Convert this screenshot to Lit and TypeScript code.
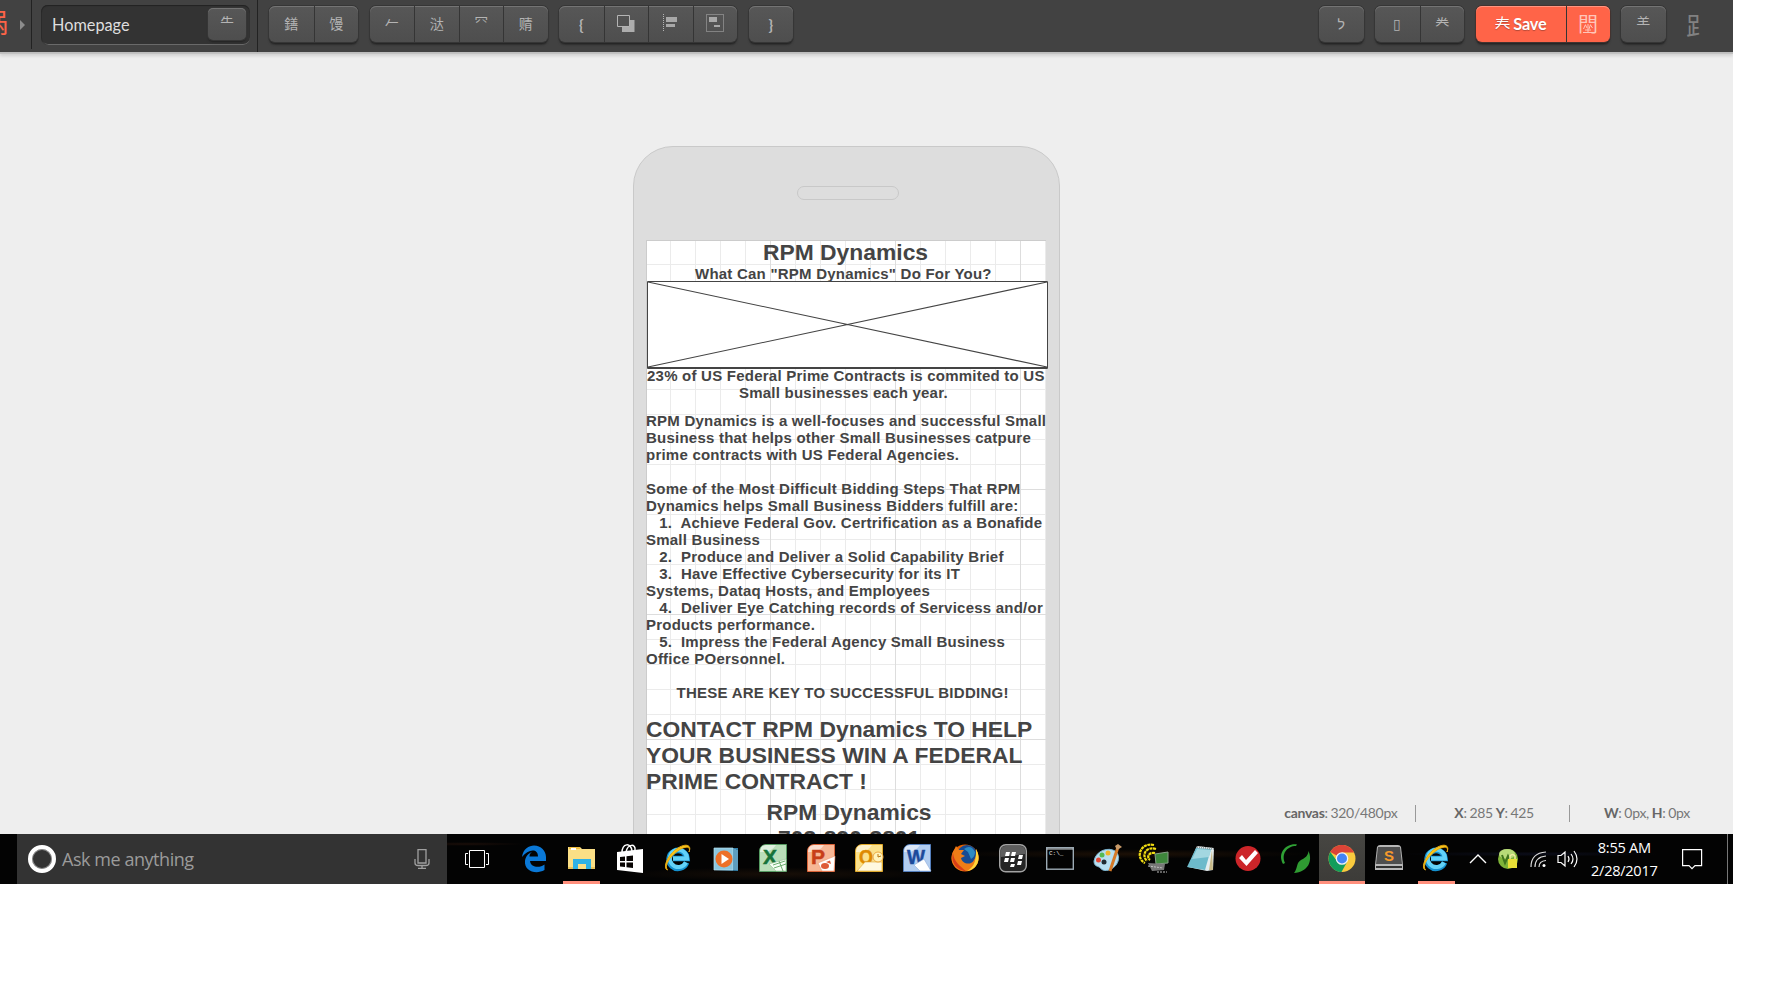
import { LitElement, html, svg, css, nothing } from "lit";
import { customElement } from "lit/decorators.js";

const GLYPH = {
  logo: "祸",
  edit: "⺧",
  one: "鐥",
  two: "馒",
  three: "𠂉",
  four: "㳠",
  five: "⺳",
  six: "䞍",
  undo: "ל",
  blank: "▯",
  play: "龹",
  save: "𡗗",
  help: "⺷",
  user: "⻊",
};

@customElement("tool-bar")
class ToolBar extends LitElement {
  static styles = css`
    :host { display: flex; height: 52px; background: #424242; font-family: Lato, "Noto Sans CJK SC", sans-serif; color: #b4b4b4; position: relative; z-index: 2; box-shadow: 0 1px 0 #bdbdbd, 0 2px 0 #c2c2c2, 0 4px 3px rgba(0,0,0,.12); }
    .logo { width: 8px; height: 42px; padding-top: 7px; overflow: hidden; display: flex; justify-content: flex-end; color: #ff6448; font-size: 27px; line-height: 32px; }
    .caret { width: 5px; height: 10px; margin: 20px 6px 0 12px; fill: #8c8c8c; }
    .rule { width: 1px; height: 49px; background: #222; }
    .rule.full { height: 52px; margin: 0 11px 0 7px; }
    .page { box-sizing: border-box; width: 209px; height: 40px; margin: 5px 0 0 9px; padding: 3px 4px 0 11px; border-radius: 7px; background: #333; box-shadow: inset 0 1px 1px #222, inset 1px 0 0 #2c2c2c, inset 0 -1px 0 #6a6a6a; display: flex; justify-content: space-between; color: #dedede; font-size: 16.300px; line-height: 33px; }
    .group { display: flex; height: 36px; margin: 6px 11.500px 0 0; border-radius: 6px; background: linear-gradient(#575757, #4e4e4e); box-shadow: inset 0 1px 0 #747474, 0 0 0 1px #363636, 0 2px 1px #262626, 0 3px 2px #303030; }
    .group.small { height: 32px; margin: 0; border-radius: 5px; }
    .group.small .cell { color: #b4b4b4; }
    .group.hot { background: #ff6448; color: #fff; box-shadow: inset 0 1px 0 #ff9480, 0 0 0 1px #443330, 0 2px 1px #262626, 0 3px 2px #303030; }
    .cell { box-sizing: border-box; flex: none; width: 44.500px; display: flex; align-items: center; justify-content: center; font-size: 14px; line-height: 20px; }
    .cell + .cell { border-left: 1px solid #353535; }
    .cell.up { padding-bottom: 3px; }
    .group.small .cell { width: 38px; }
    .group.hot .cell.wide { width: 90px; gap: 3px; font-size: 16.300px; font-weight: 700; letter-spacing: -.2px; text-shadow: 0 1px 1px #b44a38; }
    .group.hot .cell.gate { width: 44px; font-size: 20px; color: #ffc6ba; }
    .gatebox { display: grid; width: 20px; height: 24px; place-items: center; line-height: 24px; }
    .gatebox > * { grid-area: 1 / 1; }
    .thin { font-weight: 400; font-size: 16px; padding-bottom: 3px; }
    .brace { font-weight: 700; font-size: 15px; }
    .space { flex: 1; }
    .user { width: 20px; margin: 9px 27px 0 9px; font-size: 25px; line-height: 32px; color: #818181; }
  `;
  render() {
    const c = (g: unknown, k = "") => html`<div class="cell ${k}">${g}</div>`;
    return html`
      <div class="logo">${GLYPH.logo}</div>
      <svg class="caret" viewBox="0 0 5 10"><path d="M0 0L5 5L0 10Z"/></svg>
      <div class="rule"></div>
      <div class="page"><span>Homepage</span><div class="group small">${c(GLYPH.edit, "up")}</div></div>
      <div class="rule full"></div>
      <div class="group">${c(GLYPH.one)}${c(GLYPH.two)}</div>
      <div class="group">${c(GLYPH.three, "up")}${c(GLYPH.four)}${c(GLYPH.five, "up")}${c(GLYPH.six)}</div>
      <div class="group">
        ${c("{", "brace")}
        ${c(html`<svg width="18" height="18"><path fill="#adadad" d="M5 5H17.500V17H5Z"/><path d="M.5 .5H12.500V11.500H.5Z" fill="#525252" stroke="#b4b4b4"/></svg>`)}
        ${c(html`<svg width="16" height="18" fill="#a8a8a8"><path d="M.5 0V18" stroke="#b4b4b4" stroke-dasharray="1 1"/><path d="M3 3H14V8H3ZM3 10H12V13H3Z"/></svg>`, "up")}
        ${c(html`<svg width="18" height="18" fill="#a8a8a8"><path d="M.5 .5H17.500V17.500H.5Z" fill="none" stroke="#b4b4b4" stroke-dasharray="1 1"/><path d="M3 3H11V8H3ZM8 11H14V13H8Z"/></svg>`, "up")}
      </div>
      <div class="group">${c("}", "brace")}</div>
      <div class="space"></div>
      <div class="group">${c(GLYPH.undo)}</div>
      <div class="group">${c(GLYPH.blank)}${c(GLYPH.play)}</div>
      <div class="group hot">${c(html`<span class="thin">${GLYPH.save}</span><span>Save</span>`, "wide")}${c(html`<div class="gatebox"><span>門</span><svg width="20" height="24" fill="none" stroke="currentColor"><path d="M5 20.500H15M10 12V20M7.500 12.500L5.500 17M7.500 13L9 16M12.500 12.500L11 17M12.500 13L14.500 16M7 18H13"/></svg></div>`, "gate")}</div>
      <div class="group">${c(GLYPH.help, "up")}</div>
      <div class="user">${GLYPH.user}</div>
    `;
  }
}

@customElement("phone-mockup")
class PhoneMockup extends LitElement {
  static styles = css`
    :host { display: block; box-sizing: border-box; width: 427px; height: 900px; border: 1px solid #c9c9c9; border-radius: 40px; background: #ddd; font-family: "Liberation Sans", Arial, sans-serif; font-weight: 700; color: #444; }
    .speaker { box-sizing: border-box; width: 102px; height: 14px; margin: 39px 0 0 163px; border: 1px solid #c8c8c8; border-radius: 7px; }
    .screen { display: flow-root; box-sizing: border-box; width: 400px; height: 700px; margin: 40px 0 0 12px; background-color: #fff; box-shadow: inset 1px 1px 0 #ccc;
      background-image: linear-gradient(90deg, #ddd 1px, transparent 1px), linear-gradient(#ddd 1px, transparent 1px), linear-gradient(90deg, #ebebeb 1px, transparent 1px), linear-gradient(#ebebeb 1px, transparent 1px);
      background-size: 125px 125px, 125px 125px, 25px 25px, 25px 25px;
      background-position: -1px -1px; }
    .line { white-space: pre; font-size: 15px; line-height: 17px; height: 17px; width: max-content; }
    .big { font-size: 22.850px; line-height: 26px; height: 26px; }
    .box { display: block; width: 401px; height: 88px; margin: -1px 0 0 1px; }
  `;
  render() {
    const s = .23;
    const lines: [string, number, number, number][] = [
      ["23% of US Federal Prime Contracts is commited to US", 1, -2, s],
      ["Small businesses each year.", 93, 0, s],
      ["RPM Dynamics is a well-focuses and successful Small", 0, 11, s],
      ["Business that helps other Small Businesses catpure", 0, 0, s],
      ["prime contracts with US Federal Agencies.", 0, 0, s],
      ["Some of the Most Difficult Bidding Steps That RPM", 0, 17, s],
      ["Dynamics helps Small Business Bidders fulfill are:", 0, 0, s],
      ["   1.  Achieve Federal Gov. Certrification as a Bonafide", 0, 0, s],
      ["Small Business", 0, 0, s],
      ["   2.  Produce and Deliver a Solid Capability Brief", 0, 0, s],
      ["   3.  Have Effective Cybersecurity for its IT", 0, 0, s],
      ["Systems, Dataq Hosts, and Employees", 0, 0, s],
      ["   4.  Deliver Eye Catching records of Servicess and/or", 0, 0, s],
      ["Products performance.", 0, 0, s],
      ["   5.  Impress the Federal Agency Small Business", 0, 0, s],
      ["Office POersonnel.", 0, 0, s],
      ["THESE ARE KEY TO SUCCESSFUL BIDDING!", 30.5, 17, .26],
    ];
    const row = ([t, x, y, sp]: [string, number, number, number], k = "") =>
      html`<div class="line ${k}" style="margin-left:${x}px;margin-top:${y}px;letter-spacing:${sp}px">${t}</div>`;
    return html`
      <div class="speaker"></div>
      <div class="screen">
        ${row(["RPM Dynamics", 117, -1, 0], "big")}
        ${row(["What Can \"RPM Dynamics\" Do For You?", 49, 0, s])}
        <svg class="box"><path fill="#fff" d="M0 0H401V88H0Z"/><path fill="none" stroke="#444" d="M.5 .5H400.500V87.500H.5ZM0 86.500H401"/><path stroke="#444" stroke-width="1.100" d="M1 1L400 86M400 1L1 86"/></svg>
        ${lines.map((l) => row(l))}
        ${row(["CONTACT RPM Dynamics TO HELP", 0, 15, 0], "big")}
        ${row(["YOUR BUSINESS WIN A FEDERAL", 0, 0, .05], "big")}
        ${row(["PRIME CONTRACT !", 0, 0, 0], "big")}
        ${row(["RPM Dynamics", 120.5, 5, 0], "big")}
        ${row(["703-890-3801", 132, 0, 0], "big")}
      </div>
    `;
  }
}

const ie = svg`<g fill="none"><path d="M22.500 18.500A9 9 0 1 1 23 14.500H9" stroke="#1490cf" stroke-width="5.600"/><path d="M22 18.500A8.600 8.600 0 1 1 23 14.500H9" stroke="#62d2f8" stroke-width="4"/><path d="M3.500 26C-2 24 4 10 14 4C22 -1 28 1 25 8C27 2 22 2 15 6C5 13 0 22 3.500 26Z" fill="#f9c61b" stroke="#e5a810" stroke-width="1"/></g>`;
const office = (letter: string, dark: string, mid: string, light: string, extra: unknown) => svg`<path d="M7 .5H27.500V27.500H.5V7Q1 1 7 .5Z" fill="${light}" stroke="${mid}"/><path d="M1 8Q12 9 17 1H7Q1 1 1 8Z" fill="#fff" opacity=".55"/><text x="4" y="20" font-family="Liberation Sans" font-weight="700" font-size="21" fill="${dark}" stroke="${dark}" stroke-width=".5" textLength="${letter === "W" ? 18 : 14}" lengthAdjust="spacingAndGlyphs">${letter}</text>${extra}`;
const icons: Record<string, unknown> = {
  edge: svg`<path d="M2 13C3 5 9 1.500 14 1.500C21 1.500 26 7 26 13V17H10C11 24 20 24 24.500 20.500V26C16 31 4 27 5 17C5.500 12 9 9 12 8C10 9 9.500 11 9.500 12.500H18C18 4 8 5 2 13Z" fill="#0a78d7"/>`,
  files: svg`<path d="M0 3H12L14 5H27V25H0Z" fill="#fbdf86"/><path d="M1 3H12V5H1Z" fill="#f0bf43"/><path d="M3 4H8V6H3Z" fill="#fff"/><path d="M5 25V15H23V25H18V20H10V25Z" fill="#2fb2e6"/><path d="M0 23H5V25H0ZM23 23H27V25H23Z" fill="#e9c45c"/>`,
  store: svg`<path d="M1 8L27 5V29L1 26Z" fill="#fff"/><path d="M6 9C6 -1 15 -2 16 7M10 8C12 -1 20 0 19 6" fill="none" stroke="#fff" stroke-width="1.500"/><path d="M4 13L9 12.500V17H4ZM10.500 12.300L17 11.500V17H10.500ZM4 18.500H9V23L4 22.500ZM10.500 18.500H17V24L10.500 23.200Z" fill="#080503"/>`,
  ie,
  media: svg`<path d="M3 4L26 4V27L3 26Z" fill="#347fa8"/><path d="M2 4H21V26H2Z" fill="#8cc7df" stroke="#b8e3f0" stroke-width=".7"/><path d="M23 5V26M25 6V26" stroke="#88bed6"/><circle cx="12" cy="15" r="8.500" fill="#ed7028"/><path d="M9.500 10V20L17 15Z" fill="#fff"/>`,
  excel: office("X", "#16733a", "#569b62", "#b9deb9", svg`<path d="M10 20L27 15V27H17Z" fill="#f5fff4" stroke="#98bc98" stroke-width=".6"/><path d="M14 21L26 17M15 24L27 20M20 17L24 27" stroke="#6eae71"/>`),
  ppt: office("P", "#c83e18", "#da6337", "#f7b796", svg`<path d="M11 19L28 12L27 27H15Z" fill="#fff" stroke="#ea9876" stroke-width=".6"/><ellipse cx="18" cy="22" rx="4" ry="3" fill="#de5b38"/><path d="M19 18L23 16.500L24 20Z" fill="#de5b38"/>`),
  outlook: office("O", "#de8a00", "#e2aa29", "#fbe18c", svg`<path d="M2 27L10 18H27V27Z" fill="#fff9df" stroke="#daa93b" stroke-width=".6"/><circle cx="23" cy="13" r="5" fill="#fff3bd" stroke="#edaa40"/><path d="M23 10V13L26 12" stroke="#b97710" fill="none"/>`),
  word: office("W", "#1c4a9b", "#547fbd", "#b2cdf0", svg`<path d="M11 21L21 15L28 27H17Z" fill="#fff" stroke="#8eacda" stroke-width=".6"/>`),
  firefox: svg`<circle cx="14" cy="14" r="13.500" fill="#e66000"/><circle cx="16" cy="11" r="10" fill="#174b93"/><path d="M13 5Q20 0 24 8Q24 13 20 15L17 8Z" fill="#2c8bc4"/><path d="M25 5C31 15 26 26 15 27C3 28 -3 15 3 6L5 2L8 6L13 6L10 10L14 12L10 14C11 20 20 22 23 16C26 12 25 8 25 5Z" fill="#ef7d17"/><path d="M25 5C31 15 26 26 16 27C25 22 25 14 25 5Z" fill="#ffd63a"/><path d="M2 9C-1 20 8 27 15 27C9 22 3 18 2 9Z" fill="#d93d18"/>`,
  bb: svg`<rect x=".7" y="0.700" width="26.600" height="27" rx="6" fill="#252525" stroke="#a3a3a3" stroke-width="1.400"/><path d="M2 13V6Q2 2 7 2H21Q26 2 26 6V10Z" fill="#5e5e5e"/><path d="M7 8h4l-1 4H6zM13 8h4l-1 4h-4zM6 14h4l-1 4H5zM12 14h4l-1 4h-4zM20 11h4l-1 4h-4zM19 17h4l-1 4h-4zM12 20h4l-1 3h-4z" fill="#fff"/>`,
  cmd: svg`<rect x=".7" y="3.700" width="26.600" height="21.500" fill="#030303" stroke="#9caab4" stroke-width="1.400"/><path d="M1 5H27" stroke="#d0d7dc"/><text x="3" y="11" font-family="Liberation Mono" font-size="6" fill="#eee">C:\\_</text>`,
  paint: svg`<path d="M1 17C3 6 16 3 22 7C29 12 25 23 16 26C9 28 8 24 6 23C4 22 1 22 1 17Z" fill="#b8dff0" stroke="#7ab3d0"/><circle cx="5.500" cy="16" r="2.500" fill="#e44937"/><circle cx="9" cy="11" r="2.500" fill="#54ba54"/><circle cx="15" cy="9" r="2.500" fill="#efb52c"/><circle cx="11" cy="18" r="2.500" fill="#202c32"/><path d="M25 3L17 27" stroke="#d57a28" stroke-width="3"/><path d="M22 2L25 0L29 3L24 6Z" fill="#c89b6a"/>`,
  radar: svg`<path d="M14 1C0 -2 -5 14 5 19M16 5C6 2 1 11 7 17M15 9C9 8 6 13 10 16" fill="none" stroke="#f1dd12" stroke-width="2.200" stroke-dasharray="3 .6"/><path d="M15 10L28 8V19L16 20Z" fill="#3e873b" stroke="#89a18a"/><path d="M8 19L25 20L24 26L12 27Z" fill="#777"/><path d="M8 22L23 24M17 28H27" stroke="#c0c0c0" stroke-dasharray="2 1"/>`,
  notes: svg`<path d="M10 2L27 4L26 26L20 27L1 23Z" fill="#e5edef"/><path d="M9 4L24 5L18 26L0 23Z" fill="#6dbacb"/><path d="M10 5L24 6L22 13L5 15Z" fill="#a3d7e1"/><path d="M25 6L26 26L22 26Z" fill="#c7b989"/><path d="M10 3L27 5" stroke="#8d9495" stroke-width="2" stroke-dasharray="1 1"/>`,
  check: svg`<circle cx="14" cy="14.500" r="12.500" fill="#cc2529"/><path d="M5 14L8 11L12 16L21 6L24 9L12.500 22Z" fill="#fff"/>`,
  leaf: svg`<path d="M2 20C-4 9 5 -1 16 0.500L15 2C6 2 0 10 4 19Z" fill="#2fa035"/><path d="M27.500 7C32 17 27 28 13 29C17 24 15 19 20 16C24 14 27 12 27.500 7Z" fill="#2f9b32"/>`,
  chrome: svg`<circle cx="14" cy="14.500" r="13.500" fill="#f9ca3e"/><path d="M14 14.500L2.300 8C7 -2 22 -1 26 8.500H14Z" fill="#db4437"/><path d="M2.300 8C-3 18 5 28 13.500 28L19 18L14 14.500L9 17Z" fill="#129d5b"/><circle cx="14" cy="14.500" r="6.300" fill="#f4f4f4"/><circle cx="14" cy="14.500" r="5" fill="#4384f4"/>`,
  sublime: svg`<path d="M2 3Q3 1 5 1H23Q25 1 26 3L28 21V26H0V21Z" fill="#b7b7b7"/><path d="M3 3H25L27 20H1Z" fill="#4e4e4e"/><path d="M1 22H27V24H1Z" fill="#303030"/><text x="14" y="16.500" font-family="Liberation Sans" font-weight="700" font-size="15" fill="#f89a2a" text-anchor="middle">S</text>`,
};

@customElement("task-bar")
class TaskBar extends LitElement {
  static styles = css`
    :host { display: flex; height: 50px; color: #fff; font-family: "Open Sans", "Noto Sans", sans-serif;
      background: radial-gradient(ellipse at 0 60%, #25150f, transparent 22px), radial-gradient(ellipse at 465px 10px, #1b0e09 0, transparent 60px), radial-gradient(ellipse at 780px 40px, #170e07, transparent 160px), radial-gradient(ellipse at 1130px 20px, #1c1006, transparent 180px), radial-gradient(ellipse at 1530px 20px, #0b0d1a, transparent 130px), #030303; }
    .search { width: 430px; height: 50px; margin-left: 17px; background: #333; display: flex; align-items: center; color: #9b9b9b; font-size: 18px; flex: none; }
    .ring { box-sizing: border-box; width: 28px; height: 28px; margin: 0 6px 0 11px; border: 4px solid #fff; border-radius: 50%; box-shadow: inset 0 0 0 1px #888; }
    .search span { flex: 1; letter-spacing: -.45px; }
    .mic { margin-right: 17px; }
    .view { width: 24px; margin: 15px 0 0 18px; height: 20px; flex: none; }
    .apps { display: flex; margin-left: 21px; }
    .app { box-sizing: border-box; width: 47.900px; height: 50px; display: flex; flex-direction: column; align-items: center; padding-top: 10px; justify-content: space-between; }
    .app.tight { width: 47px; }
    .app svg { width: 28px; height: 28px; overflow: visible; }
    .app.active { background: linear-gradient(#474642, #3c3b38); width: 46px; margin-right: 1px; }
    .bar { width: 37px; height: 3px; background: #ff8f7c; }
    .active .bar { width: 46px; }
    .tray { display: flex; margin-left: 9.500px; }
    .tray svg { flex: none; overflow: visible; }
    .clock { width: 76px; text-align: center; font-size: 14.600px; line-height: 23px; padding-top: 2px; letter-spacing: -.3px; margin-left: 8px; white-space: nowrap; }
    .edge { width: 1px; height: 50px; background: #777; margin-left: 24px; }
  `;
  render() {
    const order = ["edge", "files", "store", "ie", "media", "excel", "ppt", "outlook", "word", "firefox", "bb", "cmd", "paint", "radar", "notes", "check", "leaf", "chrome", "sublime", "ie"];
    return html`
      <div class="search"><div class="ring"></div><span>Ask me anything</span>
        <svg class="mic" width="16" height="20" fill="none" stroke="#a0a0a0" stroke-width="1.300"><path d="M4 .7H12V14H4ZM1 10V14Q1 16.500 4 16.500H12Q15 16.500 15 14V10M8 16.500V19M4 19.300H12"/></svg></div>
      <svg class="view" fill="none" stroke="#fff"><path d="M4.500 1.500H19.500V18.500H4.500ZM3 4.500H.5V15.500H3M21 4.500H23.500V15.500H21"/></svg>
      <div class="apps">${order.map((n, i) => html`<div class="app ${i > 10 ? "tight" : ""} ${n === "chrome" ? "active" : ""}"><svg viewBox="0 0 28 28">${icons[n]}</svg>${i === 1 || i === 17 || i === 19 ? html`<div class="bar"></div>` : nothing}</div>`)}</div>
      <div class="tray">
        <svg width="17" height="50" fill="none" stroke="#fff" stroke-width="1.400"><path d="M1 29L9 21L17 29"/></svg>
        <svg width="20" height="50" style="margin-left:12px"><circle cx="10" cy="25" r="10" fill="#7eb338"/><ellipse cx="9" cy="20" rx="8" ry="5" fill="#b7da78"/><path d="M4 21L7 29L10 22L12 26" fill="none" stroke="#3f741d" stroke-width="2"/><path d="M10 25H19V34H10Z" fill="#e8df36"/><path d="M12 25V22Q14.500 19 17 22V25" fill="none" stroke="#f0eca0" stroke-width="1.500"/></svg>
        <svg width="16" height="50" style="margin-left:12px" fill="none" stroke="#ddd" stroke-width="1.200"><path d="M1 33Q1 19 16 18M5 33Q5 23 16 22M9 33Q9 27 16 26.500"/><circle cx="14" cy="31.500" r="1.500" fill="#fff" stroke="none"/></svg>
        <svg width="21" height="50" style="margin-left:11px" fill="none" stroke="#fff" stroke-width="1.200"><path d="M1 21.500H4L8 18V32L4 28.500H1ZM11 22Q13 25 11 28M14 20Q18 25 14 30M17 17Q23 25 17 33"/></svg>
        <div class="clock"><div>8:55 AM</div><div>2/28/2017</div></div>
        <svg width="21" height="50" style="margin-left:20px" fill="none" stroke="#fff" stroke-width="1.200"><path d="M.6 15.600H19.600V31.600H13L10 34.600L7 31.600H.6Z"/></svg>
        <div class="edge"></div>
      </div>
    `;
  }
}

@customElement("app-root")
class AppRoot extends LitElement {
  static styles = css`
    :host { display: block; width: 1776px; height: 1000px; background: #fff; overflow: hidden; }
    .shot { width: 1733px; height: 884px; display: flex; flex-direction: column; overflow: hidden; }
    .canvas { height: 782px; overflow: hidden; background: #eee; position: relative; flex: none; }
    phone-mockup { margin: 94px 0 0 633px; }
    .status { position: absolute; right: 43px; bottom: 13px; display: flex; align-items: center; font: 14px/16px Lato, sans-serif; letter-spacing: -.3px; word-spacing: -.5px; color: #777; height: 16px; white-space: nowrap; }
    .status b { color: #666; }
    .status i { width: 1px; height: 17px; background: #999; }
    .a { margin-right: 18px; }
    .b { margin: 0 35px 0 38px; }
    .c { margin-left: 34px; }
  `;
  render() {
    return html`<div class="shot">
      <tool-bar></tool-bar>
      <div class="canvas">
        <phone-mockup></phone-mockup>
        <div class="status"><span class="a"><b>canvas</b>: 320/480px</span><i></i><span class="b"><b>X</b>: 285 <b>Y</b>: 425</span><i></i><span class="c"><b>W</b>: 0px, <b>H</b>: 0px</span></div>
      </div>
      <task-bar></task-bar>
    </div>`;
  }
}
